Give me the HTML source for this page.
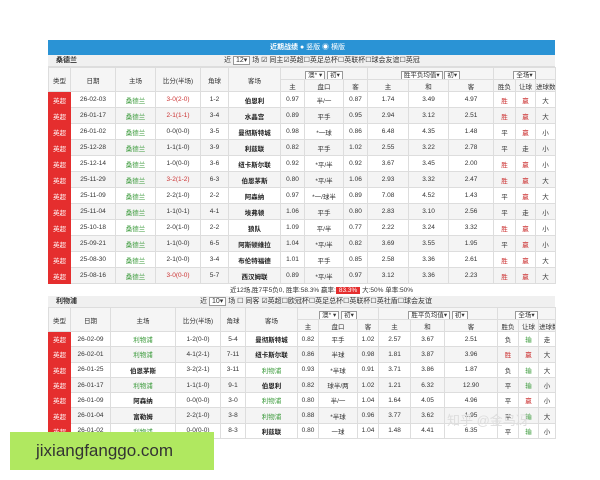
<!DOCTYPE html>
<html><head><meta charset="utf-8"><style>
*{margin:0;padding:0;box-sizing:border-box}
body{width:600px;height:480px;background:#fff;font-family:"Liberation Sans","Noto Sans CJK SC",sans-serif;font-size:7px;color:#333;position:relative;overflow:hidden}
.bar{position:absolute;left:48px;top:40px;width:507px;height:15px;background:#2a93d5;color:#fff;font-size:7px;line-height:15px;padding-left:222px}
.bar b{font-weight:bold}
.team{position:absolute;left:48px;width:507px;height:12px;background:#f0f0f0;border-bottom:1px solid #ddd;line-height:12px;font-size:7px}
.team .n{position:absolute;left:8px;font-weight:bold}
.team .o{position:absolute;white-space:nowrap}
table{position:absolute;left:48px;border-collapse:collapse;table-layout:fixed;width:507px}
td{border:1px solid #ddd;text-align:center;white-space:nowrap;overflow:hidden;padding:0;font-size:6.5px}
tr.h td{background:#f5f5f5;height:12px}
tr.d td{height:16px}
.b2 tr.d td{height:15.3px}
tr.d:nth-child(even) td{background:#f4f4f4}
td.t{background:#e52e2e!important;color:#fff;border-color:#e52e2e}
.g{color:#3a9a3a}.r{color:#c33}.bld{color:#222;font-weight:bold}
.sum{position:absolute;left:48px;top:285px;width:507px;height:11px;line-height:11px;text-align:center;font-size:6.5px;padding-left:40px}
.sum span{background:#e52e2e;color:#fff;padding:0 3px}
.sel{border:1px solid #999;background:#fff;padding:0 2px}
.wm{position:absolute;left:10px;top:432px;width:204px;height:38px;background:#b0e860;color:#333;font-size:17px;line-height:38px;padding-left:26px}
.zh{position:absolute;left:447px;top:410px;color:#ddd;font-size:13px}
</style></head><body>
<div class="bar"><b>近期战绩</b> ● 竖版 ◉ 横版</div>
<div class="team" style="top:55px"><span class="n">桑德兰</span><span class="o" style="left:176px">近 <span class="sel">12▾</span> 场 ☑ 同主☑英超☐英足总杯☐英联杯☐球会友谊☐英冠</span></div>
<table style="top:67px">
<colgroup><col style="width:22px"><col style="width:45px"><col style="width:40px"><col style="width:45px"><col style="width:28px"><col style="width:52px"><col style="width:24px"><col style="width:39px"><col style="width:24px"><col style="width:41px"><col style="width:40px"><col style="width:45px"><col style="width:22px"><col style="width:20px"><col style="width:20px"></colgroup>
<tr class="h"><td rowspan="2">类型</td><td rowspan="2">日期</td><td rowspan="2">主场</td><td rowspan="2">比分(半场)</td><td rowspan="2">角球</td><td rowspan="2">客场</td><td colspan="3"><span class="sel">澳* ▾</span> <span class="sel">初▾</span></td><td colspan="3"><span class="sel">胜平负均值▾</span> <span class="sel">初▾</span></td><td colspan="3"><span class="sel">全场▾</span></td></tr>
<tr class="h"><td>主</td><td>盘口</td><td>客</td><td>主</td><td>和</td><td>客</td><td>胜负</td><td>让球</td><td>进球数</td></tr>
<tr class="d"><td class="t">英超</td><td>26-02-03</td><td class="g">桑德兰</td><td class="r">3-0(2-0)</td><td>1-2</td><td class="bld">伯恩利</td><td>0.97</td><td>半/一</td><td>0.87</td><td>1.74</td><td>3.49</td><td>4.97</td><td class="r">胜</td><td class="r">赢</td><td>大</td></tr>
<tr class="d"><td class="t">英超</td><td>26-01-17</td><td class="g">桑德兰</td><td class="r">2-1(1-1)</td><td>3-4</td><td class="bld">水晶宫</td><td>0.89</td><td>平手</td><td>0.95</td><td>2.94</td><td>3.12</td><td>2.51</td><td class="r">胜</td><td class="r">赢</td><td>大</td></tr>
<tr class="d"><td class="t">英超</td><td>26-01-02</td><td class="g">桑德兰</td><td>0-0(0-0)</td><td>3-5</td><td class="bld">曼彻斯特城</td><td>0.98</td><td>*一球</td><td>0.86</td><td>6.48</td><td>4.35</td><td>1.48</td><td>平</td><td class="r">赢</td><td>小</td></tr>
<tr class="d"><td class="t">英超</td><td>25-12-28</td><td class="g">桑德兰</td><td>1-1(1-0)</td><td>3-9</td><td class="bld">利兹联</td><td>0.82</td><td>平手</td><td>1.02</td><td>2.55</td><td>3.22</td><td>2.78</td><td>平</td><td>走</td><td>小</td></tr>
<tr class="d"><td class="t">英超</td><td>25-12-14</td><td class="g">桑德兰</td><td>1-0(0-0)</td><td>3-6</td><td class="bld">纽卡斯尔联</td><td>0.92</td><td>*平/半</td><td>0.92</td><td>3.67</td><td>3.45</td><td>2.00</td><td class="r">胜</td><td class="r">赢</td><td>小</td></tr>
<tr class="d"><td class="t">英超</td><td>25-11-29</td><td class="g">桑德兰</td><td class="r">3-2(1-2)</td><td>6-3</td><td class="bld">伯恩茅斯</td><td>0.80</td><td>*平/半</td><td>1.06</td><td>2.93</td><td>3.32</td><td>2.47</td><td class="r">胜</td><td class="r">赢</td><td>大</td></tr>
<tr class="d"><td class="t">英超</td><td>25-11-09</td><td class="g">桑德兰</td><td>2-2(1-0)</td><td>2-2</td><td class="bld">阿森纳</td><td>0.97</td><td>*一/球半</td><td>0.89</td><td>7.08</td><td>4.52</td><td>1.43</td><td>平</td><td class="r">赢</td><td>大</td></tr>
<tr class="d"><td class="t">英超</td><td>25-11-04</td><td class="g">桑德兰</td><td>1-1(0-1)</td><td>4-1</td><td class="bld">埃弗顿</td><td>1.06</td><td>平手</td><td>0.80</td><td>2.83</td><td>3.10</td><td>2.56</td><td>平</td><td>走</td><td>小</td></tr>
<tr class="d"><td class="t">英超</td><td>25-10-18</td><td class="g">桑德兰</td><td>2-0(1-0)</td><td>2-2</td><td class="bld">狼队</td><td>1.09</td><td>平/半</td><td>0.77</td><td>2.22</td><td>3.24</td><td>3.32</td><td class="r">胜</td><td class="r">赢</td><td>小</td></tr>
<tr class="d"><td class="t">英超</td><td>25-09-21</td><td class="g">桑德兰</td><td>1-1(0-0)</td><td>6-5</td><td class="bld">阿斯顿维拉</td><td>1.04</td><td>*平/半</td><td>0.82</td><td>3.69</td><td>3.55</td><td>1.95</td><td>平</td><td class="r">赢</td><td>小</td></tr>
<tr class="d"><td class="t">英超</td><td>25-08-30</td><td class="g">桑德兰</td><td>2-1(0-0)</td><td>3-4</td><td class="bld">布伦特福德</td><td>1.01</td><td>平手</td><td>0.85</td><td>2.58</td><td>3.36</td><td>2.61</td><td class="r">胜</td><td class="r">赢</td><td>大</td></tr>
<tr class="d"><td class="t">英超</td><td>25-08-16</td><td class="g">桑德兰</td><td class="r">3-0(0-0)</td><td>5-7</td><td class="bld">西汉姆联</td><td>0.89</td><td>*平/半</td><td>0.97</td><td>3.12</td><td>3.36</td><td>2.23</td><td class="r">胜</td><td class="r">赢</td><td>大</td></tr>
</table>
<div class="sum">近12场,胜7平5负0, 胜率:58.3% 赢率:<span>83.3%</span> 大:50% 单率:50%</div>
<div class="team" style="top:296px"><span class="n">利物浦</span><span class="o" style="left:152px">近 <span class="sel">10▾</span> 场 ☐ 同客 ☑英超☐欧冠杯☐英足总杯☐英联杯☐英社盾☐球会友谊</span></div>
<table class="b2" style="top:307px">
<colgroup><col style="width:22px"><col style="width:40px"><col style="width:65px"><col style="width:45px"><col style="width:25px"><col style="width:52px"><col style="width:21px"><col style="width:39px"><col style="width:21px"><col style="width:32px"><col style="width:34px"><col style="width:53px"><col style="width:21px"><col style="width:20px"><col style="width:17px"></colgroup>
<tr class="h"><td rowspan="2">类型</td><td rowspan="2">日期</td><td rowspan="2">主场</td><td rowspan="2">比分(半场)</td><td rowspan="2">角球</td><td rowspan="2">客场</td><td colspan="3"><span class="sel">澳* ▾</span> <span class="sel">初▾</span></td><td colspan="3"><span class="sel">胜平负均值▾</span> <span class="sel">初▾</span></td><td colspan="3"><span class="sel">全场▾</span></td></tr>
<tr class="h"><td>主</td><td>盘口</td><td>客</td><td>主</td><td>和</td><td>客</td><td>胜负</td><td>让球</td><td>进球数</td></tr>
<tr class="d"><td class="t">英超</td><td>26-02-09</td><td class="g">利物浦</td><td>1-2(0-0)</td><td>5-4</td><td class="bld">曼彻斯特城</td><td>0.82</td><td>平手</td><td>1.02</td><td>2.57</td><td>3.67</td><td>2.51</td><td>负</td><td class="g">输</td><td>走</td></tr>
<tr class="d"><td class="t">英超</td><td>26-02-01</td><td class="g">利物浦</td><td>4-1(2-1)</td><td>7-11</td><td class="bld">纽卡斯尔联</td><td>0.86</td><td>半球</td><td>0.98</td><td>1.81</td><td>3.87</td><td>3.96</td><td class="r">胜</td><td class="r">赢</td><td>大</td></tr>
<tr class="d"><td class="t">英超</td><td>26-01-25</td><td class="bld">伯恩茅斯</td><td>3-2(2-1)</td><td>3-11</td><td class="g">利物浦</td><td>0.93</td><td>*半球</td><td>0.91</td><td>3.71</td><td>3.86</td><td>1.87</td><td>负</td><td class="g">输</td><td>大</td></tr>
<tr class="d"><td class="t">英超</td><td>26-01-17</td><td class="g">利物浦</td><td>1-1(1-0)</td><td>9-1</td><td class="bld">伯恩利</td><td>0.82</td><td>球半/两</td><td>1.02</td><td>1.21</td><td>6.32</td><td>12.90</td><td>平</td><td class="g">输</td><td>小</td></tr>
<tr class="d"><td class="t">英超</td><td>26-01-09</td><td class="bld">阿森纳</td><td>0-0(0-0)</td><td>3-0</td><td class="g">利物浦</td><td>0.80</td><td>半/一</td><td>1.04</td><td>1.64</td><td>4.05</td><td>4.96</td><td>平</td><td class="r">赢</td><td>小</td></tr>
<tr class="d"><td class="t">英超</td><td>26-01-04</td><td class="bld">富勒姆</td><td>2-2(1-0)</td><td>3-8</td><td class="g">利物浦</td><td>0.88</td><td>*半球</td><td>0.96</td><td>3.77</td><td>3.62</td><td>1.95</td><td>平</td><td class="g">输</td><td>大</td></tr>
<tr class="d"><td class="t">英超</td><td>26-01-02</td><td class="g">利物浦</td><td>0-0(0-0)</td><td>8-3</td><td class="bld">利兹联</td><td>0.80</td><td>一球</td><td>1.04</td><td>1.48</td><td>4.41</td><td>6.35</td><td>平</td><td class="g">输</td><td>小</td></tr>
</table>
<div class="zh">知乎 @金乌冴</div>
<div class="wm">jixiangfanggo.com</div>
</body></html>
